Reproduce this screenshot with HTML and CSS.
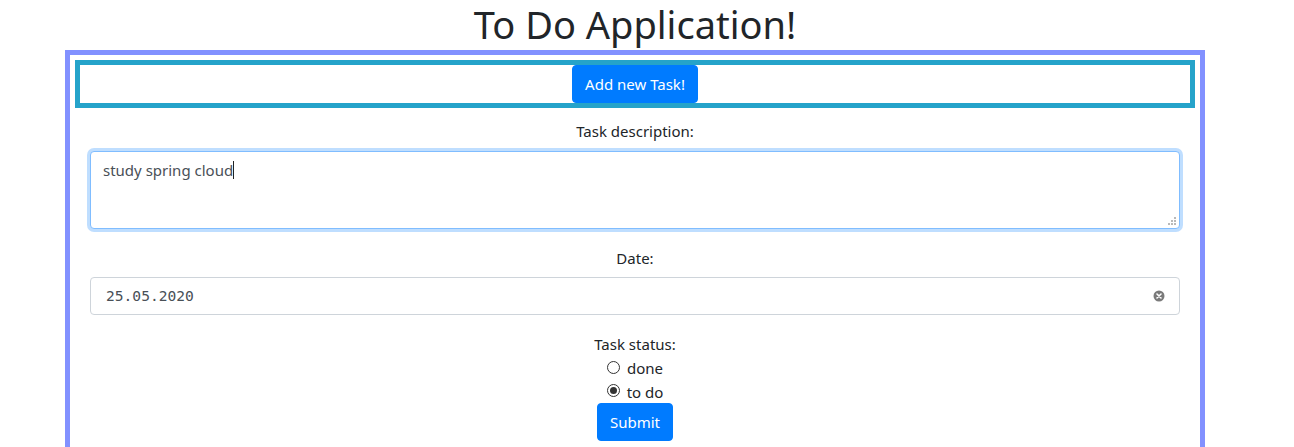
FILE: index.html
```html
<!DOCTYPE html>
<html lang="en">
<head>
<meta charset="utf-8">
<title>To Do Application</title>
<link rel="stylesheet" href="styles.css">
</head>
<body>
<div class="page">
  <h1 class="title">To Do Application!</h1>
  <div class="frame">
    <div class="bar">
      <button class="btn" type="button">Add new Task!</button>
    </div>
    <form class="task-form">
      <div class="group">
        <label class="lbl lbl-desc" for="desc">Task description:</label>
        <div class="area-wrap">
          <textarea id="desc" class="control area focused">study spring cloud</textarea>
          <span class="caret"></span>
          <svg class="grip" width="8" height="8" viewBox="0 0 8 8"><g fill="#b9b9b9"><rect x="6" y="0" width="2" height="2"/><rect x="3" y="3" width="2" height="2"/><rect x="6" y="3" width="2" height="2"/><rect x="0" y="6" width="2" height="2"/><rect x="3" y="6" width="2" height="2"/><rect x="6" y="6" width="2" height="2"/></g></svg>
        </div>
      </div>
      <div class="group">
        <label class="lbl lbl-date">Date:</label>
        <div class="control date">
          <span class="date-text">25.05.2020</span>
          <svg class="clear" width="12" height="12" viewBox="0 0 12 12"><circle cx="6" cy="6" r="5.5" fill="#7a7a7a"/><path d="M4 4 L8 8 M8 4 L4 8" stroke="#fff" stroke-width="1.6" stroke-linecap="round"/></svg>
        </div>
      </div>
      <div class="status">
        <div class="lbl-status">Task status:</div>
        <label class="radio-row"><span class="radio"></span><span>done</span></label>
        <label class="radio-row"><span class="radio checked"></span><span>to do</span></label>
        <button class="btn" type="button">Submit</button>
      </div>
    </form>
  </div>
</div>
</body>
</html>
```
FILE: styles.css
```css
html, body {
  margin: 0;
  padding: 0;
  background: #fff;
}
body {
  font-family: "Noto Sans", "Open Sans", sans-serif;
  font-size: 15px;
  line-height: 24px;
  color: #212529;
  overflow: hidden;
}
.page {
  width: 1270px;
}
.title {
  margin: 0 0 2px;
  font-size: 38px;
  font-weight: 400;
  line-height: 48px;
  text-align: center;
  color: #212529;
}
.frame {
  box-sizing: border-box;
  width: 1140px;
  margin: 0 auto;
  border: 5px solid #8291ff;
  padding: 5px;
  height: 420px;
}
.bar {
  box-sizing: border-box;
  border: 5px solid #25a3ca;
  height: 48px;
  display: flex;
  justify-content: center;
}
.btn {
  font-family: inherit;
  font-size: 15px;
  line-height: 24px;
  color: #fff;
  background: #007bff;
  border: 1px solid #007bff;
  border-radius: 4px;
  padding: 6px 12px;
  height: 38px;
  cursor: pointer;
}
.task-form {
  margin: 0 15px;
  display: flex;
  flex-direction: column;
}
.group {
  display: flex;
  flex-direction: column;
  align-items: center;
}
.lbl {
  display: block;
  text-align: center;
}
.lbl-desc {
  margin: 11px 0 8px;
}
.lbl-date {
  margin: 17px 0 7px;
}
.control {
  box-sizing: border-box;
  width: 100%;
  border: 1px solid #ced4da;
  border-radius: 4px;
  font-family: inherit;
  font-size: 15px;
  line-height: 24px;
  color: #495057;
  background: #fff;
}
.area-wrap {
  position: relative;
  width: 100%;
}
.area {
  height: 78px;
  padding: 6px 12px;
  resize: none;
  display: block;
  margin: 0;
}
.caret {
  position: absolute;
  left: 143px;
  top: 10px;
  width: 1px;
  height: 18px;
  background: #222;
}
.grip {
  position: absolute;
  right: 4px;
  bottom: 4px;
}
.focused {
  border-color: #80bdff;
  outline: none;
  box-shadow: 0 0 0 3px rgba(0, 123, 255, 0.25);
}
.date {
  height: 38px;
  padding: 6px 15px;
  display: flex;
  align-items: center;
  justify-content: space-between;
}
.date-text {
  font-family: "DejaVu Sans Mono", monospace;
  font-size: 14.6px;
  color: #495057;
}
.clear {
  margin-right: -1px;
}
.status {
  display: flex;
  flex-direction: column;
  align-items: center;
  margin-top: 17px;
}
.lbl-status {
  height: 24px;
}
.radio-row {
  display: flex;
  align-items: center;
  gap: 7px;
  height: 24px;
}
.radio-row:last-of-type {
  height: 23px;
}
.radio {
  box-sizing: border-box;
  width: 13px;
  height: 13px;
  border: 1px solid #333;
  border-radius: 50%;
  background: #fff;
  display: flex;
  align-items: center;
  justify-content: center;
  margin-top: -2px;
}
.radio.checked::after {
  content: "";
  width: 7px;
  height: 7px;
  border-radius: 50%;
  background: #333;
}
```
